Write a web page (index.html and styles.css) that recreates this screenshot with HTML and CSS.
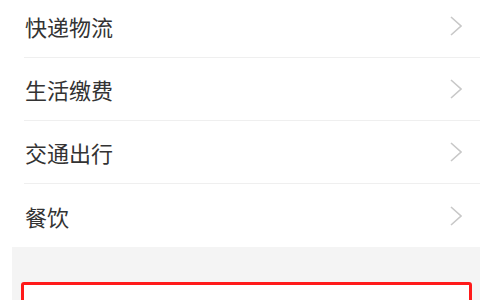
FILE: index.html
```html
<!DOCTYPE html>
<html lang="zh-CN">
<head>
<meta charset="utf-8">
<link rel="stylesheet" href="styles.css">
</head>
<body>
<ul class="list">
  <li class="row"><span class="label">快递物流</span><svg class="chev" viewBox="0 0 12 20" width="12" height="20"><polyline points="1,1 11,10 1,19"/></svg></li>
  <li class="row"><span class="label">生活缴费</span><svg class="chev" viewBox="0 0 12 20" width="12" height="20"><polyline points="1,1 11,10 1,19"/></svg></li>
  <li class="row"><span class="label">交通出行</span><svg class="chev" viewBox="0 0 12 20" width="12" height="20"><polyline points="1,1 11,10 1,19"/></svg></li>
  <li class="row"><span class="label">餐饮</span><svg class="chev" viewBox="0 0 12 20" width="12" height="20"><polyline points="1,1 11,10 1,19"/></svg></li>
</ul>
<section class="gray">
  <div class="card"></div>
</section>
</body>
</html>
```
FILE: styles.css
```css
html, body {
  margin: 0;
  padding: 0;
  background: #ffffff;
  overflow: hidden;
  height: 300px;
}
body {
  font-family: "Noto Sans CJK SC", "Noto Sans", sans-serif;
}
.list {
  list-style: none;
  margin: -5px 0 0 0;
  padding: 0;
}
.row {
  height: 62px;
  display: flex;
  align-items: center;
  justify-content: space-between;
  padding: 0 18px 0 25px;
  border-bottom: 1px solid transparent;
  background-image: linear-gradient(#efefef, #efefef);
  background-repeat: no-repeat;
  background-size: calc(100% - 24px) 1px;
  background-position: 24px 100%;
  background-origin: border-box;
}
.row:last-child {
  height: 63px;
  border-bottom: none;
  background-image: none;
}
.label {
  font-size: 22px;
  color: #333333;
  line-height: 1;
}
.chev {
  display: block;
}
.chev polyline {
  fill: none;
  stroke: #c8c8c8;
  stroke-width: 1.6;
}
.gray {
  margin-left: 12px;
  background: #f4f4f4;
  padding: 35px 8px 0 9px;
  height: 53px;
  box-sizing: border-box;
  overflow: hidden;
}
.card {
  height: 40px;
  background: #ffffff;
  border: 3.5px solid #ff1a1a;
  border-radius: 3px;
}
```
